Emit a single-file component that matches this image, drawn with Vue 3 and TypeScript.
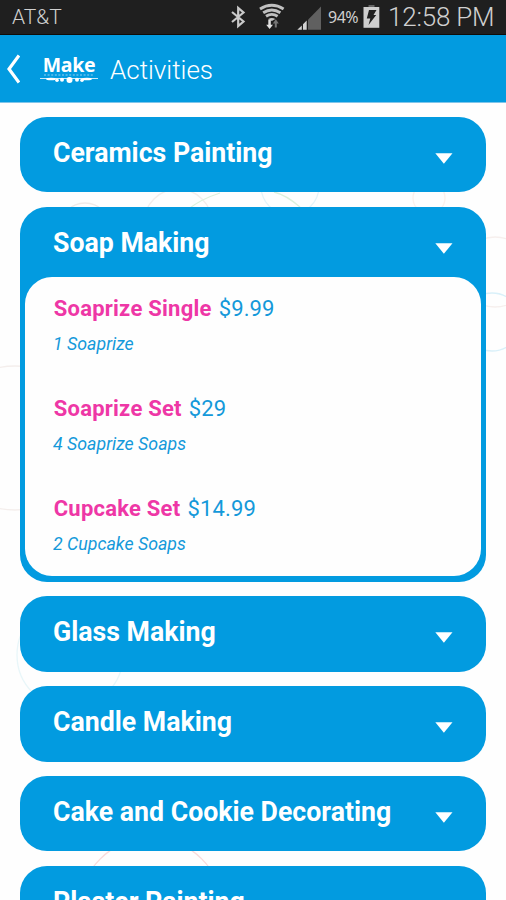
<script setup lang="ts">
import { ref } from 'vue'

interface Offer {
  name: string
  price: string
  detail: string
}

interface Activity {
  title: string
  offers: Offer[]
}

const activities: Activity[] = [
  { title: 'Ceramics Painting', offers: [] },
  {
    title: 'Soap Making',
    offers: [
      { name: 'Soaprize Single', price: '$9.99', detail: '1 Soaprize' },
      { name: 'Soaprize Set', price: '$29', detail: '4 Soaprize Soaps' },
      { name: 'Cupcake Set', price: '$14.99', detail: '2 Cupcake Soaps' },
    ],
  },
  { title: 'Glass Making', offers: [] },
  { title: 'Candle Making', offers: [] },
  { title: 'Cake and Cookie Decorating', offers: [] },
  { title: 'Plaster Painting', offers: [] },
]

const openTitle = ref<string>('Soap Making')

function toggle(title: string): void {
  openTitle.value = openTitle.value === title ? '' : title
}
</script>

<template>
  <div class="screen">
    <div class="status">
      <span class="carrier">AT&amp;T</span>
      <svg class="indicators" width="92" height="34" viewBox="230 0 92 34">
        <path d="M232 12l11.500 9.500-5.300 4.500V8l5.300 4.500L232 22" fill="none" stroke="#c9c9c9" stroke-width="2.200" />
        <g fill="none" stroke="#c0c0c0" stroke-width="2.900">
          <path d="M260 9q11.800-7.400 23.600 0" />
          <path d="M263.200 12.800q8.600-5.600 17.200 0" />
          <path d="M266 16.300q5.800-3.800 11.600 0" />
        </g>
        <path d="M268.300 19q3.500-2.200 7 0l-3.500 2z" fill="#c4c4c4" />
        <path d="M268.300 19.500h2.500v5.200h2.200l-3.400 4.300-3.400-4.300h2.100z" fill="#e2e2e2" />
        <path d="M274.800 27.500v-4h-2l3-4.200 3 4.200h-2v4z" fill="#777" />
        <path d="M308 29.700V19.700L321 6.500v23.200z" fill="#606060" />
        <path d="M297.300 29.700l4.500-4.300v4.300zM303 29.700v-5.500l3.700-3.700v9.200z" fill="#d2d2d2" />
      </svg>
      <span class="charge">94%</span>
      <svg class="battery" width="17" height="24" viewBox="0 0 17 24">
        <path d="M5.500 0h6v3h-6z" fill="#666" />
        <path d="M.5 2h15.800v20.800H.5z" fill="#cecece" />
        <path d="M6 5h7.500L10.500 10h2.700L5.500 20l1.800-6.500H3.800z" fill="#202020" />
      </svg>
      <span class="clock">12:58 PM</span>
    </div>

    <header class="bar">
      <svg class="back" width="15" height="30" viewBox="0 0 15 30">
        <path d="M14 1.500L4 15l10 13.500" fill="none" stroke="#fff" stroke-width="3.200" />
      </svg>
      <div class="brand">
        <span class="brand-name">Make</span>
        <svg class="brand-mark" width="60" height="12" viewBox="0 0 60 12">
          <path d="M5 2h50" stroke="#8fd0f1" stroke-width="1.200" stroke-dasharray="2 1.600" />
          <path d="M1 5.500h58" stroke="#fff" stroke-width=".8" />
          <g fill="#fff">
            <ellipse cx="12" cy="6" rx="5" ry="1.300" />
            <ellipse cx="48" cy="6" rx="5" ry="1.300" />
            <circle cx="18" cy="7.300" r="1.800" />
            <circle cx="23" cy="6.700" r="2" />
            <circle cx="30.500" cy="7" r="3" />
            <circle cx="38" cy="6.700" r="2" />
            <circle cx="43" cy="7.300" r="1.800" />
          </g>
        </svg>
      </div>
      <h1 class="page-title">Activities</h1>
    </header>

    <main class="content">
      <svg class="backdrop" width="506" height="798" viewBox="0 102 506 798">
        <g fill="none" stroke-width="1.300">
          <circle cx="178" cy="223" r="34" stroke="#f3edeb" />
          <circle cx="85" cy="228" r="25" stroke="#f0eae8" />
          <path d="M187 210q14-11 33-17M274 192q12 3 26 15" stroke="#dcf1dc" />
          <circle cx="290" cy="186" r="29" stroke="#e3f3f9" />
          <circle cx="429" cy="198" r="16" stroke="#fbf1ec" />
          <circle cx="495" cy="272" r="35" stroke="#f6efed" />
          <circle cx="492" cy="322" r="29" stroke="#d9f0f9" />
          <circle cx="15" cy="438" r="72" stroke="#f4eeec" />
          <circle cx="70" cy="655" r="53" stroke="#e8f6f9" />
          <circle cx="151" cy="910" r="72" stroke="#f9dada" />
        </g>
      </svg>
      <div class="list">
        <section v-for="activity in activities" :key="activity.title" class="card">
          <button class="card-head" @click="toggle(activity.title)">
            <span class="card-title">{{ activity.title }}</span>
            <svg class="caret" width="18" height="11" viewBox="0 0 18 11">
              <path d="M.3.300h17.200L8.900 10.700z" fill="#fff" />
            </svg>
          </button>
          <div v-if="openTitle === activity.title && activity.offers.length" class="panel">
            <div v-for="offer in activity.offers" :key="offer.name" class="offer">
              <div class="offer-line">
                <span class="offer-name">{{ offer.name }}</span>
                <span class="offer-price">{{ offer.price }}</span>
              </div>
              <div class="offer-detail">{{ offer.detail }}</div>
            </div>
          </div>
        </section>
      </div>
    </main>
  </div>
</template>

<style>
body {
  margin: 0;
  overflow: hidden;
}
</style>

<style scoped>
.screen {
  width: 506px;
  height: 900px;
  display: flex;
  flex-direction: column;
  overflow: hidden;
  background: #fefefe;
  font-family: Roboto, sans-serif;
}
.status {
  flex: none;
  box-sizing: border-box;
  height: 35px;
  padding: 0 0 0 12px;
  display: flex;
  align-items: center;
  background: #1f1f1f;
  border-bottom: 1px solid #100c08;
  color: #d0d0d0;
  white-space: nowrap;
}
.carrier {
  flex: none;
  width: 218px;
  font-size: 21px;
  font-weight: 300;
}
.indicators,
.battery {
  flex: none;
}
.charge {
  flex: none;
  width: 36px;
  padding-left: 6px;
  box-sizing: border-box;
  font-family: "Noto Sans", sans-serif;
  font-size: 16px;
  letter-spacing: -0.500px;
}
.battery {
  margin: -1px 0 0 4.500px;
}
.clock {
  margin-left: 8.500px;
  font-size: 26px;
  font-weight: 300;
  letter-spacing: -0.200px;
}
.bar {
  flex: none;
  box-sizing: border-box;
  height: 67px;
  padding-left: 5px;
  display: flex;
  align-items: center;
  background: #029be0;
  color: #fff;
  box-shadow: 0 1px 0 #7fc5ea;
}
.back {
  flex: none;
  margin-top: 1px;
}
.brand {
  width: 60px;
  margin-left: 19px;
  display: flex;
  flex-direction: column;
  align-items: center;
}
.brand-name {
  font-family: "Noto Sans", sans-serif;
  font-weight: 700;
  font-size: 19.500px;
  line-height: 20px;
  letter-spacing: -0.300px;
  margin-top: 2px;
}
.brand-mark {
  margin-top: -2px;
}
.page-title {
  margin: 3px 0 0 11px;
  font-size: 26px;
  font-weight: 300;
  line-height: 32px;
}
.content {
  flex: 1;
  min-height: 0;
  position: relative;
}
.backdrop {
  position: absolute;
  inset: 0;
}
.list {
  position: relative;
  display: flex;
  flex-direction: column;
  gap: 14.300px;
  padding: 14.800px 20px 0;
}
.card {
  box-sizing: border-box;
  min-height: 75.600px;
  border-radius: 27px;
  background: #029be0;
  padding: 0 5.300px 5.300px;
}
.card-head {
  width: 100%;
  height: 70.300px;
  box-sizing: border-box;
  border: 0;
  background: none;
  padding: 0 27.500px 0 28px;
  display: flex;
  align-items: center;
  justify-content: space-between;
  font-family: inherit;
  color: #fff;
  text-align: left;
}
.card-title {
  margin-top: 2px;
  font-size: 28px;
  font-weight: 700;
  line-height: 32px;
  white-space: nowrap;
  transform: scaleX(0.953);
  transform-origin: left center;
}
.caret {
  flex: none;
  margin-top: 13px;
}
.panel {
  box-sizing: border-box;
  height: 299.500px;
  border-radius: 27px;
  background: #fefefe;
  padding: 18px 28px 0;
  display: flex;
  flex-direction: column;
}
.offer {
  height: 100px;
  flex: none;
}
.offer-line {
  display: flex;
  align-items: center;
  gap: 7px;
  height: 28px;
  padding-left: 0.400px;
  font-size: 22px;
}
.offer-name {
  color: #ee37a6;
  font-weight: 700;
  letter-spacing: 0.240px;
}
.offer-price {
  color: #1499da;
  font-weight: 400;
  letter-spacing: 0.150px;
}
.offer-detail {
  margin-top: 8px;
  line-height: 26px;
  font-size: 19px;
  font-style: italic;
  color: #1499da;
  transform: scaleX(0.935);
  transform-origin: left center;
}
</style>
